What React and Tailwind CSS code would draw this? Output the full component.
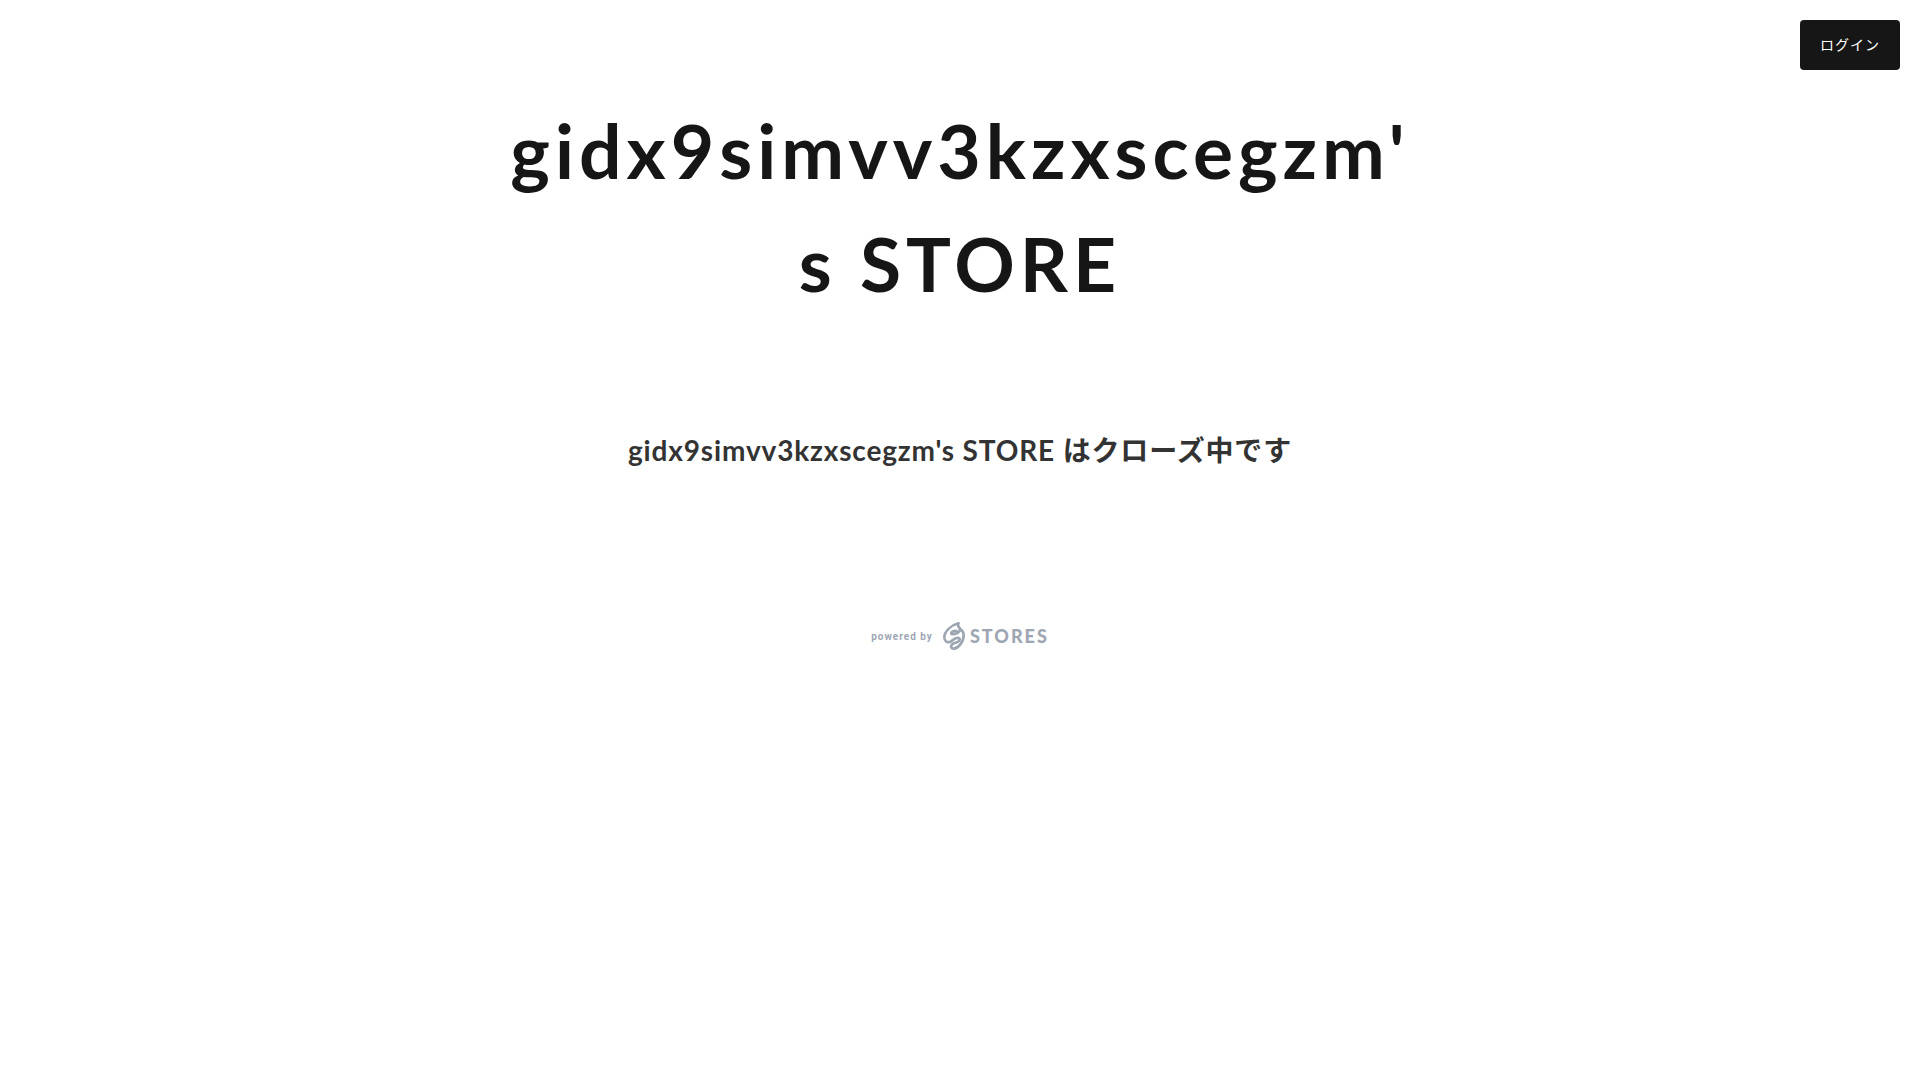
const STORE_NAME = "gidx9simvv3kzxscegzm's STORE"

function StoresMark() {
  return (
    <svg
      viewBox="0 0 66 84"
      className="h-7 w-[22px]"
      fill="none"
      stroke="currentColor"
      strokeWidth="8"
      strokeLinecap="round"
      strokeLinejoin="round"
      aria-hidden="true"
    >
      <path d="M46 4C24 10 4 28 4 46c0 12 8 17 18 13 7-3 10-8 16-10 8-3 13-1 12 4-1 6-8 8-15 10-12 3-15 17-3 17 12 0 30-19 30-40 0-10-4-16-12-20" />
      <path d="M46 4c-2 5-1 9 3 13 4 5 3 11-4 15-7 3-14 6-19 4-3-3 0-8 7-9 4-1 8 0 12 3" />
    </svg>
  )
}

function Header() {
  return (
    <header className="flex justify-end px-5 pt-5">
      <button
        type="button"
        className="h-[50px] w-[100px] rounded bg-[#161616] text-sm tracking-[1px] text-white"
      >
        ログイン
      </button>
    </header>
  )
}

function Footer() {
  return (
    <footer className="mt-[151px] flex justify-center">
      <a href="#" className="flex items-center text-[#9ea6b4]">
        <span className="mr-[10px] font-['Roboto',sans-serif] text-[10px] font-bold tracking-[1px]">
          powered by
        </span>
        <StoresMark />
        <span className="ml-[5px] font-['Lato',sans-serif] text-lg leading-7 font-black tracking-[2px]">
          STORES
        </span>
      </a>
    </footer>
  )
}

function App() {
  return (
    <div className="font-['Lato','Noto_Sans_CJK_JP',sans-serif]">
      <Header />
      <main className="mx-auto max-w-[980px] px-6 pt-6 text-center">
        <h1 className="text-[75px] leading-[113px] font-bold tracking-[5px] wrap-anywhere text-[#161616]">
          {STORE_NAME}
        </h1>
        <p className="mt-[109px] text-[28px] leading-[42px] font-bold tracking-[0.03em] text-[#333333]">
          {STORE_NAME} はクローズ中です
        </p>
      </main>
      <Footer />
    </div>
  )
}

export default App
